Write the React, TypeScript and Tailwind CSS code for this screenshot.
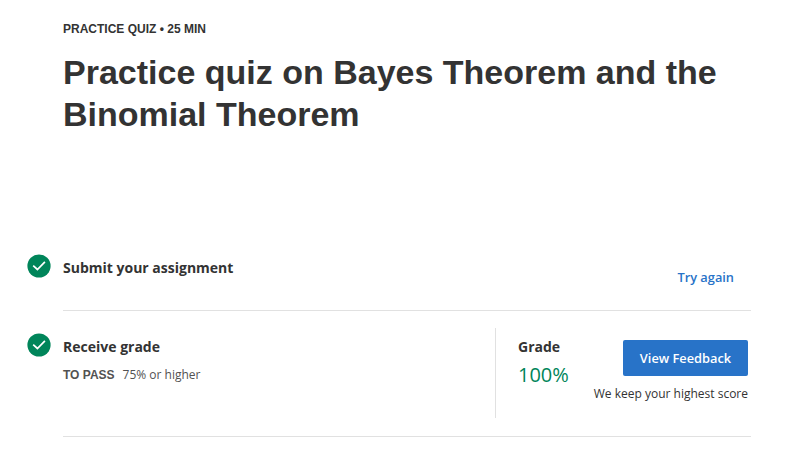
function Check() {
  return (
    <svg className="size-6 shrink-0" viewBox="0 0 24 24" fill="none">
      <circle cx="12" cy="12" r="11.6" fill="#00855a" />
      <path d="M6.2 11.7 10.4 15.5 17.9 7.9" stroke="white" strokeWidth="1.7" />
    </svg>
  );
}

export default function App() {
  return (
    <main className="h-[455px] w-[787px] overflow-hidden bg-white font-['Open_Sans',sans-serif] text-[#333]">
      <header className="h-[242px] pl-[63px] pt-[20px] font-['Liberation_Sans',Arial,sans-serif] font-bold">
        <p className="text-[12px] leading-[18px]">PRACTICE QUIZ • 25 MIN</p>
        <h1 className="mt-[13px] w-[690px] text-[34px] leading-[42px]">
          Practice quiz on Bayes Theorem and the<br />Binomial Theorem
        </h1>
      </header>
      <section className="flex h-[69px] pl-[27px] pr-[36px]">
        <div className="mt-[12px]"><Check /></div>
        <div className="ml-[12px] flex flex-1 justify-between border-b border-[#e1e1e1] pr-[17px]">
          <h2 className="mt-[16px] text-[14px] font-bold leading-[20px]">Submit your assignment</h2>
          <button className="mt-[25px] h-[20px] text-[12.8px] font-semibold leading-[20px] text-[#2873c8]">Try again</button>
        </div>
      </section>
      <section className="flex h-[126px] pl-[27px] pr-[36px]">
        <div className="mt-[22px]"><Check /></div>
        <div className="ml-[12px] flex flex-1 border-b border-[#e1e1e1]">
          <div className="w-[432px] pt-[26px]">
            <h2 className="text-[14px] font-bold leading-[20px]">Receive grade</h2>
            <p className="mt-[8px] text-[12px] leading-[20px] text-[#525252]"><span className="mr-2 font-['Liberation_Sans',Arial,sans-serif] font-bold">TO PASS</span>75% or higher</p>
          </div>
          <div className="mt-[17px] flex h-[90px] flex-1 justify-between border-l border-[#e1e1e1] pl-[22px] pr-[3px]">
            <div className="pt-[9px]">
              <h2 className="text-[14px] font-bold leading-[20px]">Grade</h2>
              <p className="mt-[4px] text-[20px] leading-[28px] text-[#00855a]">100%</p>
            </div>
            <div className="flex flex-col items-end pt-[12px]">
              <button className="h-[36px] w-[125px] rounded-[2px] bg-[#2873c8] text-[12.8px] font-semibold leading-[20px] text-white">View Feedback</button>
              <p className="mt-[8px] whitespace-nowrap text-[12px] leading-[20px]">We keep your highest score</p>
            </div>
          </div>
        </div>
      </section>
    </main>
  );
}
